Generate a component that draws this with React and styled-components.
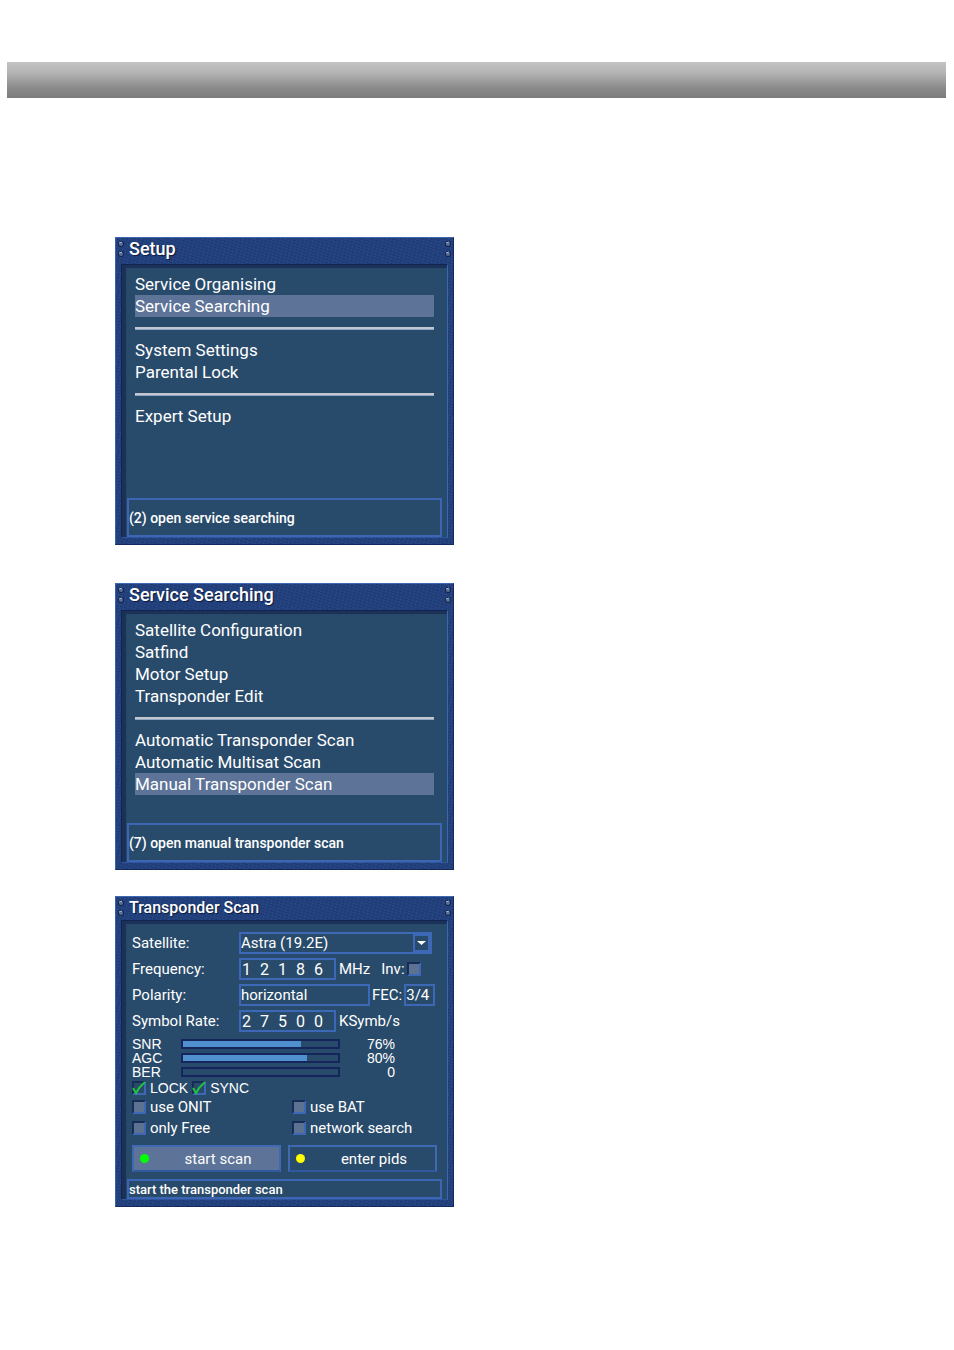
import { useState } from "react";
import styled, { createGlobalStyle } from "styled-components";

const GlobalStyle = createGlobalStyle`
  * {
    box-sizing: border-box;
  }

  body {
    margin: 0;
    background: #ffffff;
    font-family: Roboto, "Liberation Sans", sans-serif;
  }

  button,
  input,
  select {
    font-family: inherit;
    color: inherit;
    margin: 0;
  }
`;

const Page = styled.div`
  padding: 62px 8px 40px 7px;
`;

const PageBar = styled.header`
  height: 36px;
  background: linear-gradient(#c3c3c3, #b4b4b4 30%, #8a8a8a 72%, #7b7b7b);
`;

const Panels = styled.main`
  display: flex;
  flex-direction: column;
  padding: 139px 0 0 108px;
`;

const Panel = styled.section`
  display: flex;
  flex-direction: column;
  width: 100%;
  max-width: 339px;
  min-height: ${(props) => props.$height}px;
  margin-bottom: ${(props) => props.$gap || 0}px;
  padding: 0 2px 6px;
  border: 1px solid;
  border-color: #3c68b4 #14295e #14295e #3561b0;
  background-color: #23417d;
  background-image: repeating-linear-gradient(
      17deg,
      rgba(10, 24, 70, 0.16) 0 1px,
      transparent 1px 3px
    ),
    repeating-linear-gradient(
      103deg,
      rgba(70, 110, 180, 0.14) 0 1px,
      transparent 1px 4px
    );
  color: #ffffff;
`;

const TitleBar = styled.div`
  display: flex;
  align-items: flex-start;
  height: ${(props) => (props.$slim ? 23 : 26)}px;
`;

const Title = styled.h2`
  flex: 1;
  margin: 0 0 0 5px;
  font-size: ${(props) => (props.$slim ? 16 : 18)}px;
  font-weight: 500;
  line-height: 21px;
  text-shadow: 1px 1px 1px #0b1a3c;
`;

const ScrewIcon = styled.svg`
  width: 6px;
  height: 18px;
  margin-top: 2px;
  flex: none;
`;

const Body = styled.div`
  flex: 1;
  display: flex;
  flex-direction: column;
  margin: 0 3px;
  padding-left: 5px;
  border: 1px solid;
  border-color: #122552 #3a66b4 #2f559f #122552;
  background: #294b6b;
  box-shadow: inset 4px 3px 1px #1b3157;
`;

const Menu = styled.ul`
  list-style: none;
  margin: 0;
  padding: 8px 13px 0 8px;
`;

const MenuButton = styled.button`
  display: block;
  width: 100%;
  height: 22px;
  padding: 0;
  border: 0;
  background: ${(props) => (props.$active ? "#5d7397" : "transparent")};
  font-size: 17px;
  line-height: 20px;
  text-align: left;
  white-space: nowrap;
`;

const Divider = styled.li`
  height: 22px;
  padding-top: 10px;

  &::before {
    content: "";
    display: block;
    height: 2px;
    background: #c4c6d0;
    border-bottom: 1px solid #8ea7c4;
  }
`;

const Hint = styled.p`
  display: flex;
  align-items: center;
  height: ${(props) => (props.$slim ? 20 : 39)}px;
  margin: auto 5px 0 0;
  border: 2px solid #3c66b4;
  font-size: ${(props) => (props.$slim ? 13 : 14)}px;
  font-weight: 500;
`;

const Form = styled.form`
  padding: 11px 10px 0 5px;
  font-size: 15px;
`;

const FieldRow = styled.div`
  display: flex;
  align-items: center;
  height: 22px;
  margin-bottom: 4px;
`;

const FieldLabel = styled.label`
  width: 107px;
  flex: none;
  line-height: 22px;
`;

const SelectBox = styled.div`
  position: relative;
  flex: none;
  width: ${(props) => props.$width}px;
  height: 22px;
`;

const Select = styled.select`
  appearance: none;
  width: 100%;
  height: 100%;
  padding: 0;
  border: 2px solid #3d68b8;
  border-radius: 0;
  background: transparent;
  font-size: 15px;
  line-height: 17px;

  option {
    background: #294b6b;
  }
`;

const ArrowIcon = styled.svg`
  position: absolute;
  top: 2px;
  right: 2px;
  width: 17px;
  height: 18px;
  pointer-events: none;
`;

const Digits = styled.div`
  display: flex;
  flex: none;
  width: 97px;
  height: 22px;
  border: 2px solid #3d68b8;
`;

const Digit = styled.input`
  width: 18px;
  height: 18px;
  padding: 0 0 0 1px;
  border: 0;
  background: transparent;
  font-size: 16px;
`;

const Unit = styled.span`
  margin-left: 3px;
`;

const InlineLabel = styled.label`
  margin: 0 2px 0 ${(props) => props.$indent}px;
`;

const CheckBox = styled.input`
  appearance: none;
  display: block;
  flex: none;
  width: 14px;
  height: 14px;
  border: 2px solid;
  border-color: #172c57 #3d68b8 #3d68b8 #172c57;
  background: #5d7191;

  &:checked {
    background: #294b6b;
  }
`;

const CheckHolder = styled.span`
  position: relative;
  display: block;
`;

const TickIcon = styled.svg`
  position: absolute;
  left: 0;
  top: 0;
  width: 14px;
  height: 14px;
  pointer-events: none;
`;

const Meters = styled.div`
  padding-top: 1px;
  font-family: "Liberation Sans", Arial, sans-serif;
  font-size: 14px;
`;

const MeterRow = styled.div`
  display: flex;
  align-items: center;
  height: 14px;
  line-height: 14px;
`;

const MeterName = styled.span`
  width: 49px;
`;

const MeterTrack = styled.div`
  width: 159px;
  height: 10px;
  border: 2px solid #14265c;
`;

const MeterFill = styled.div`
  height: 100%;
  background: #5190cf;
`;

const MeterValue = styled.span`
  width: 55px;
  text-align: right;
`;

const Flags = styled.div`
  display: flex;
  gap: 4px;
  height: 17px;
  font-family: "Liberation Sans", Arial, sans-serif;
  font-size: 14px;
`;

const Options = styled.div`
  display: grid;
  grid-template-columns: 160px 1fr;
  grid-auto-rows: 21px;
`;

const CheckLabel = styled.label`
  display: flex;
  align-items: center;
  gap: 4px;
  white-space: nowrap;
`;

const Actions = styled.div`
  display: grid;
  grid-template-columns: 1fr 1fr;
  gap: 7px;
  padding-top: 7px;
`;

const ActionButton = styled.button`
  display: flex;
  align-items: center;
  height: 27px;
  padding: 0 6px;
  border: 2px solid;
  border-color: #4069b4 #4069b4 #31579f #4069b4;
  background: ${(props) => (props.$active ? "#5d7397" : "transparent")};
  font-size: 15px;
`;

const Dot = styled.span`
  width: 9px;
  height: 9px;
  border-radius: 50%;
  background: ${(props) => props.$color};
`;

const ActionText = styled.span`
  flex: 1;
  padding-left: 14px;
  text-align: center;
`;

const Screws = () => (
  <ScrewIcon viewBox="0 0 6 18" aria-hidden="true">
    {[4, 14].map((y) => (
      <g key={y}>
        <circle cx="3" cy={y} r="3" fill="#13254f" />
        <circle cx="3" cy={y} r="2" fill="#596e98" />
        <path d={`M1 ${y - 1}L4 ${y - 2}`} stroke="#a9b8d2" />
      </g>
    ))}
  </ScrewIcon>
);

const Window = ({ title, hint, height, gap, slim, children }) => (
  <Panel $height={height} $gap={gap}>
    <TitleBar $slim={slim}>
      <Screws />
      <Title $slim={slim}>{title}</Title>
      <Screws />
    </TitleBar>
    <Body>
      {children}
      <Hint $slim={slim}>{hint}</Hint>
    </Body>
  </Panel>
);

const MenuList = ({ items, initial }) => {
  const [active, setActive] = useState(initial);
  return (
    <Menu>
      {items.map((item, index) =>
        item === null ? (
          <Divider key={index} role="separator" />
        ) : (
          <li key={item}>
            <MenuButton
              type="button"
              $active={item === active}
              onClick={() => setActive(item)}
            >
              {item}
            </MenuButton>
          </li>
        )
      )}
    </Menu>
  );
};

const DigitField = ({ id, value }) => (
  <Digits>
    {value.split("").map((digit, index) => (
      <Digit
        key={index}
        id={index === 0 ? id : undefined}
        aria-label={`${id} digit ${index + 1}`}
        maxLength={1}
        defaultValue={digit}
      />
    ))}
  </Digits>
);

const Flag = ({ children }) => (
  <CheckLabel>
    <CheckHolder>
      <CheckBox type="checkbox" checked readOnly />
      <TickIcon viewBox="0 0 14 14" aria-hidden="true">
        <path
          d="M1 7L4 12Q7 6 13 1"
          fill="none"
          stroke="#20c53c"
          strokeWidth="2"
        />
      </TickIcon>
    </CheckHolder>
    {children}
  </CheckLabel>
);

const setupItems = [
  "Service Organising",
  "Service Searching",
  null,
  "System Settings",
  "Parental Lock",
  null,
  "Expert Setup",
];

const searchItems = [
  "Satellite Configuration",
  "Satfind",
  "Motor Setup",
  "Transponder Edit",
  null,
  "Automatic Transponder Scan",
  "Automatic Multisat Scan",
  "Manual Transponder Scan",
];

const meters = [
  { name: "SNR", percent: 76, text: "76%" },
  { name: "AGC", percent: 80, text: "80%" },
  { name: "BER", percent: 0, text: "0" },
];

const options = ["use ONIT", "use BAT", "only Free", "network search"];

const ScanForm = () => (
  <Form onSubmit={(e) => e.preventDefault()}>
    <FieldRow>
      <FieldLabel htmlFor="satellite">Satellite:</FieldLabel>
      <SelectBox $width={193}>
        <Select id="satellite">
          <option>Astra (19.2E)</option>
        </Select>
        <ArrowIcon viewBox="0 0 17 18" aria-hidden="true">
          <path d="M1 1H16V17H1Z" fill="none" stroke="#3d68b8" strokeWidth="2" />
          <path d="M4 7H13L8.5 11Z" fill="#ffffff" />
        </ArrowIcon>
      </SelectBox>
    </FieldRow>
    <FieldRow>
      <FieldLabel htmlFor="frequency">Frequency:</FieldLabel>
      <DigitField id="frequency" value="12186" />
      <Unit>MHz</Unit>
      <InlineLabel htmlFor="inversion" $indent={11}>
        Inv:
      </InlineLabel>
      <CheckBox id="inversion" type="checkbox" />
    </FieldRow>
    <FieldRow>
      <FieldLabel htmlFor="polarity">Polarity:</FieldLabel>
      <SelectBox $width={131}>
        <Select id="polarity">
          <option>horizontal</option>
        </Select>
      </SelectBox>
      <InlineLabel htmlFor="fec" $indent={2}>
        FEC:
      </InlineLabel>
      <SelectBox $width={31}>
        <Select id="fec">
          <option>3/4</option>
        </Select>
      </SelectBox>
    </FieldRow>
    <FieldRow>
      <FieldLabel htmlFor="symbolrate">Symbol Rate:</FieldLabel>
      <DigitField id="symbolrate" value="27500" />
      <Unit>KSymb/s</Unit>
    </FieldRow>
    <Meters>
      {meters.map((meter) => (
        <MeterRow key={meter.name}>
          <MeterName>{meter.name}</MeterName>
          <MeterTrack>
            <MeterFill style={{ width: `${meter.percent}%` }} />
          </MeterTrack>
          <MeterValue>{meter.text}</MeterValue>
        </MeterRow>
      ))}
    </Meters>
    <Flags>
      <Flag>LOCK</Flag>
      <Flag>SYNC</Flag>
    </Flags>
    <Options>
      {options.map((option) => (
        <CheckLabel key={option}>
          <CheckBox type="checkbox" />
          {option}
        </CheckLabel>
      ))}
    </Options>
    <Actions>
      <ActionButton type="submit" $active>
        <Dot $color="#00ff00" />
        <ActionText>start scan</ActionText>
      </ActionButton>
      <ActionButton type="button">
        <Dot $color="#ffff00" />
        <ActionText>enter pids</ActionText>
      </ActionButton>
    </Actions>
  </Form>
);

const App = () => (
  <Page>
    <GlobalStyle />
    <PageBar />
    <Panels>
      <Window title="Setup" hint="(2) open service searching" height={308} gap={38}>
        <MenuList items={setupItems} initial="Service Searching" />
      </Window>
      <Window
        title="Service Searching"
        hint="(7) open manual transponder scan"
        height={287}
        gap={26}
      >
        <MenuList items={searchItems} initial="Manual Transponder Scan" />
      </Window>
      <Window
        title="Transponder Scan"
        hint="start the transponder scan"
        height={311}
        slim
      >
        <ScanForm />
      </Window>
    </Panels>
  </Page>
);

export default App;
